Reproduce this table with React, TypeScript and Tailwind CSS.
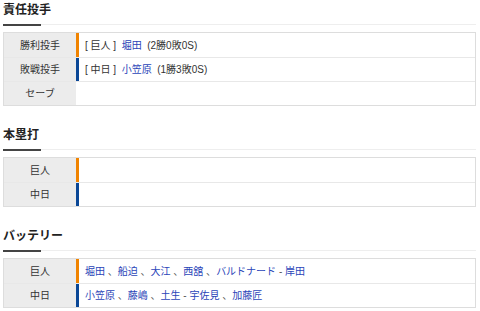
import React from "react";

type Team = "g" | "d";

type Row = {
  label: string;
  team?: Team;
  content?: React.ReactNode;
};

const BAR: Record<Team, string> = {
  g: "bg-[#f08300]",
  d: "bg-[#0a4796]",
};

const Link = ({ children }: { children: React.ReactNode }) => (
  <span className="text-[#2a44b8]">{children}</span>
);

const Sep = () => <span className="text-[#555]"> 、</span>;

function Heading({ title }: { title: string }) {
  return (
    <div>
      <h2 className="text-[12px] font-bold leading-[20px] text-[#222]">
        {title}
      </h2>
      <div className="mt-[4px] flex items-start">
        <div className="h-[2px] w-[38px] bg-[#444]" />
        <div className="h-px flex-1 bg-[#eee]" />
      </div>
    </div>
  );
}

function Table({ rows }: { rows: Row[] }) {
  return (
    <div className="mt-[6px] border border-[#ddd]">
      {rows.map((r, i) => (
        <div
          key={i}
          className={`flex h-[24px] ${i > 0 ? "border-t border-[#e8e8e8]" : ""}`}
        >
          <div className="flex w-[72px] shrink-0 items-center justify-center bg-[#ececec] text-[10px] text-[#333]">
            {r.label}
          </div>
          <div className={`w-[3px] shrink-0 ${r.team ? BAR[r.team] : ""}`} />
          <div className="flex flex-1 items-center whitespace-pre pl-[6px] text-[10px] text-[#333]">
            {r.content}
          </div>
        </div>
      ))}
    </div>
  );
}

export default function App() {
  return (
    <div
      className="w-[480px] bg-white pl-[3px] pr-[4px]"
      style={{
        fontFamily: '"Liberation Sans", "Noto Sans CJK JP", sans-serif',
      }}
    >
      <section>
        <Heading title="責任投手" />
        <Table
          rows={[
            {
              label: "勝利投手",
              team: "g",
              content: (
                <>
                  <span>[ 巨人 ]  </span>
                  <Link>堀田</Link>
                  <span>  (2勝0敗0S)</span>
                </>
              ),
            },
            {
              label: "敗戦投手",
              team: "d",
              content: (
                <>
                  <span>[ 中日 ]  </span>
                  <Link>小笠原</Link>
                  <span>  (1勝3敗0S)</span>
                </>
              ),
            },
            { label: "セーブ" },
          ]}
        />
      </section>

      <section className="mt-[19px]">
        <Heading title="本塁打" />
        <Table
          rows={[
            { label: "巨人", team: "g" },
            { label: "中日", team: "d" },
          ]}
        />
      </section>

      <section className="mt-[19px]">
        <Heading title="バッテリー" />
        <Table
          rows={[
            {
              label: "巨人",
              team: "g",
              content: (
                <>
                  <Link>堀田</Link>
                  <Sep />
                  <Link>船迫</Link>
                  <Sep />
                  <Link>大江</Link>
                  <Sep />
                  <Link>西舘</Link>
                  <Sep />
                  <Link>バルドナード</Link>
                  <span className="text-[#555]"> - </span>
                  <Link>岸田</Link>
                </>
              ),
            },
            {
              label: "中日",
              team: "d",
              content: (
                <>
                  <Link>小笠原</Link>
                  <Sep />
                  <Link>藤嶋</Link>
                  <Sep />
                  <Link>土生</Link>
                  <span className="text-[#555]"> - </span>
                  <Link>宇佐見</Link>
                  <Sep />
                  <Link>加藤匠</Link>
                </>
              ),
            },
          ]}
        />
      </section>
    </div>
  );
}
